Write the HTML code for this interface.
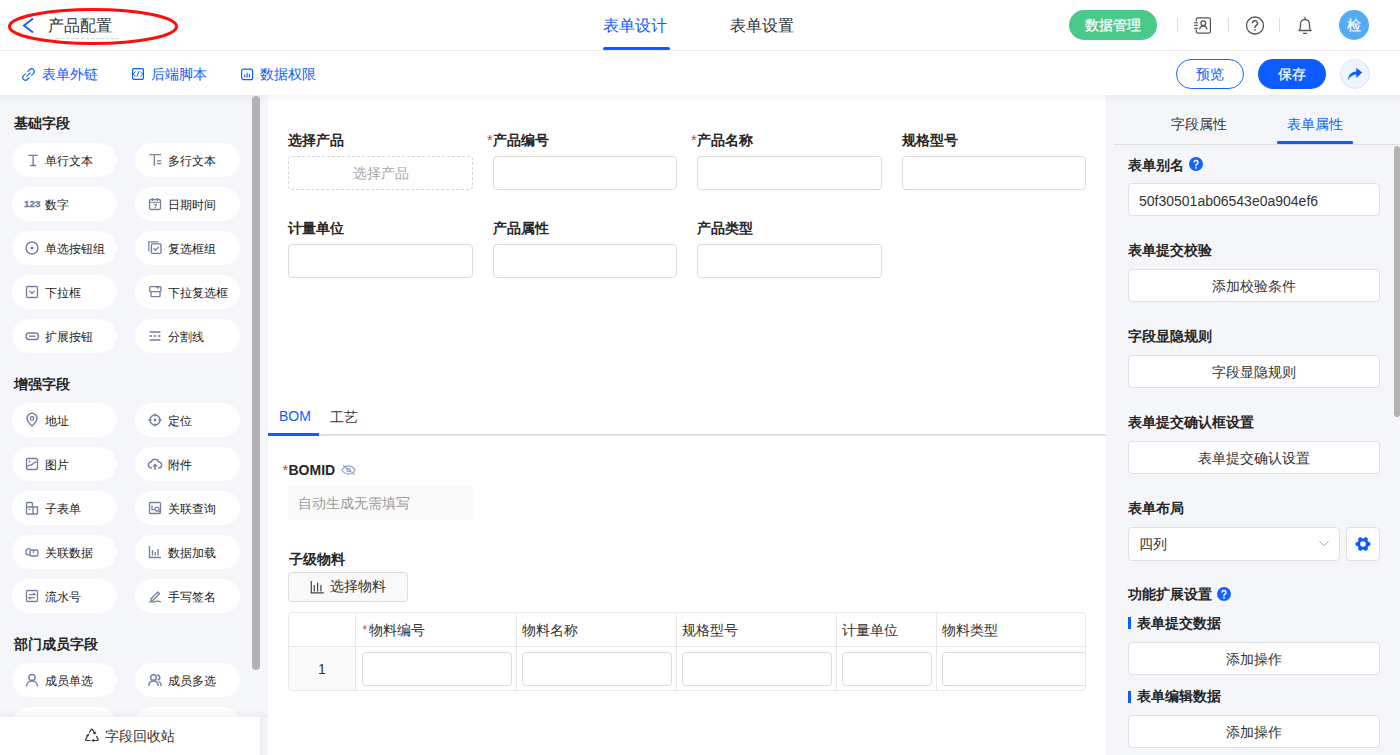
<!DOCTYPE html>
<html><head><meta charset="utf-8">
<style>
*{box-sizing:border-box;margin:0;padding:0}
html,body{width:1400px;height:755px;overflow:hidden;background:#fff;font-family:"Liberation Sans",sans-serif;color:#333}
.a{position:absolute}
.t14{position:absolute;font-size:14px;line-height:20px;white-space:nowrap}
.t12{position:absolute;font-size:12px;line-height:20px;white-space:nowrap}
.t16{position:absolute;font-size:16px;line-height:20px;white-space:nowrap}
.b{font-weight:bold}
.blue{color:#0c5cff}
svg{position:absolute;overflow:visible}
.pill{position:absolute;width:105px;height:34px;border-radius:17px;background:#fff}
.inp{position:absolute;height:34px;border:1px solid #dcdcdc;border-radius:4px;background:#fff}
.rbtn{position:absolute;left:1128px;width:252px;height:33px;border:1px solid #e0e0e0;border-radius:4px;background:#fff}
.req{position:absolute;color:#e5322d;font-size:15px;line-height:20px}
</style></head><body>

<div class="a" style="left:0;top:0;width:1400px;height:51px;background:#fff;border-bottom:1px solid #ececec"></div>
<svg style="left:0px;top:0px" width="200" height="50" viewBox="0 0 200 50" ><polyline points="33,18.5 24,25.5 33,32.5" fill="none" stroke="#1e64f0" stroke-width="2"/></svg>
<div class="t16" style="left:48px;top:16px;color:#333">产品配置</div>
<div class="a" style="left:56px;top:38px;width:63px;border-top:1px dashed #d8d8d8"></div>
<svg style="left:0px;top:0px" width="200" height="50" viewBox="0 0 200 50" ><ellipse cx="93" cy="26.5" rx="83.5" ry="17" fill="none" stroke="#ff0d0d" stroke-width="3"/></svg>
<div class="t16 blue" style="left:603px;top:16px">表单设计</div>
<div class="a" style="left:603px;top:47px;width:67px;height:3px;background:#0c5cff;border-radius:2px"></div>
<div class="t16" style="left:730px;top:16px;color:#333">表单设置</div>
<div class="a" style="left:1069px;top:10px;width:88px;height:30px;border-radius:15px;background:#4bc98b"></div>
<div class="t14" style="left:1085px;top:15px;color:#fff;-webkit-text-stroke:0.25px #fff">数据管理</div>
<div class="a" style="left:1177px;top:18px;width:1px;height:14px;background:#dedede"></div>
<div class="a" style="left:1228px;top:18px;width:1px;height:14px;background:#dedede"></div>
<div class="a" style="left:1279px;top:18px;width:1px;height:14px;background:#dedede"></div>
<svg style="left:1188px;top:10px" width="30" height="30" viewBox="0 0 30 30" ><path d="M8.3 11.2V9.3q0-1.5 1.5-1.5h11.1q1.5 0 1.5 1.5v12.3q0 1.5-1.5 1.5H9.8q-1.5 0-1.5-1.5V19.6" stroke="#555" stroke-width="1.25" fill="none"/><path d="M6.2 12.7h3.6M6.2 15.4h3.6M6.2 18.3h3.6" stroke="#555" stroke-width="1.2"/><circle cx="15.3" cy="13.3" r="2.4" stroke="#555" stroke-width="1.25" fill="none"/><path d="M11.7 19.6a3.6 3.6 0 0 1 7.2 0" stroke="#555" stroke-width="1.25" fill="none"/></svg>
<svg style="left:1245px;top:16px" width="20" height="20" viewBox="0 0 20 20" ><circle cx="10" cy="9.5" r="8.5" stroke="#555" stroke-width="1.3" fill="none"/><path d="M7.5 7.3a2.5 2.5 0 1 1 3.6 2.2c-.8.4-1.1.9-1.1 1.8v.6" stroke="#555" stroke-width="1.4" fill="none"/><circle cx="10" cy="13.8" r="0.9" fill="#555"/></svg>
<svg style="left:1297px;top:16px" width="16" height="19" viewBox="0 0 16 19" ><path d="M2 14.5c1-1 1.5-2 1.5-4V8a4.5 4.5 0 0 1 9 0v2.5c0 2 .5 3 1.5 4z" stroke="#555" stroke-width="1.3" fill="none" stroke-linejoin="round"/><path d="M6 17.3h4M8 0.8v2" stroke="#555" stroke-width="1.3"/></svg>
<div class="a" style="left:1339px;top:10px;width:30px;height:30px;border-radius:50%;background:#55acf2"></div>
<div class="t14" style="left:1347px;top:15px;color:#fff;-webkit-text-stroke:0.2px #fff">检</div>
<svg style="left:22px;top:67.5px" width="13" height="13" viewBox="0 0 13 13" ><path d="M9.671 7.147L11.509 5.309A2.7 2.7 0 0 0 7.691 1.491L5.853 3.329M3.329 5.853L1.491 7.691A2.7 2.7 0 0 0 5.309 11.509L7.147 9.671M4.8 8.2L8.2 4.8" stroke="#0c5cff" stroke-width="1.1" fill="none" stroke-linecap="round"/></svg>
<div class="t14 blue" style="left:42px;top:63.5px">表单外链</div>
<svg style="left:131px;top:67px" width="14" height="14" viewBox="0 0 14 14" ><rect x="1.6" y="1.6" width="10.8" height="10.8" rx="1.2" stroke="#0c5cff" stroke-width="1.2" fill="none"/><path d="M4.6 4.6L2.1 7l2.5 2.4M9.4 4.6L11.9 7 9.4 9.4M8 4.2L5.9 9.8" stroke="#0c5cff" stroke-width="0.95" fill="none"/></svg>
<div class="t14 blue" style="left:151px;top:63.5px">后端脚本</div>
<svg style="left:240px;top:68px" width="14" height="13" viewBox="0 0 14 13" ><rect x="1.6" y="1.2" width="11" height="10.5" rx="2" stroke="#0c5cff" stroke-width="1.2" fill="none"/><path d="M4.8 6.5v3M7.1 4.8v4.7M9.4 6v3.5" stroke="#0c5cff" stroke-width="1.1"/></svg>
<div class="t14 blue" style="left:260px;top:63.5px">数据权限</div>
<div class="a" style="left:1176px;top:59px;width:68px;height:30px;border-radius:15px;border:1px solid #1a66ff;background:#fff"></div>
<div class="t14 blue" style="left:1196px;top:64px">预览</div>
<div class="a" style="left:1258px;top:59px;width:68px;height:30px;border-radius:15px;background:#0c5cff"></div>
<div class="t14" style="left:1278px;top:64px;color:#fff;-webkit-text-stroke:0.25px #fff">保存</div>
<div class="a" style="left:1340px;top:59px;width:30px;height:30px;border-radius:50%;background:#eff4ff;border:1px solid #d9e5fc"></div>
<svg style="left:1347px;top:67px" width="16" height="14" viewBox="0 0 16 14" ><path d="M1 13C1.3 8.2 4.3 5 9.3 4.6V0.8L15.2 5.5 9.3 10.9V7.4C6 7.4 3.2 9.2 1 13z" fill="#0c5cff"/></svg>
<div class="a" style="left:0;top:95px;width:268px;height:660px;background:#f5f6fa"></div>
<div class="a" style="left:1106px;top:95px;width:294px;height:660px;background:#f5f6fa"></div>
<div class="a" style="left:0;top:95px;width:1400px;height:8px;background:linear-gradient(rgba(0,0,0,0.035),rgba(0,0,0,0))"></div>
<div class="t14 b" style="left:14px;top:113px;color:#262626">基础字段</div>
<div class="pill" style="left:12px;top:143px"></div>
<svg style="left:25px;top:153px" width="14" height="14" viewBox="0 0 14 14" ><path d="M3.3 2.4h9.6M8.1 2.4v10.1M5 12.5h6.1" stroke="#76809e" stroke-width="1.35" fill="none"/></svg>
<div class="t12" style="left:45px;top:151px;color:#222">单行文本</div>
<div class="pill" style="left:135px;top:143px"></div>
<svg style="left:148px;top:153px" width="14" height="14" viewBox="0 0 14 14" ><path d="M1.5 1.6H13M6.3 1.6V13M9 7.9h4.3M9 10.7h4.3" stroke="#76809e" stroke-width="1.3" fill="none"/></svg>
<div class="t12" style="left:168px;top:151px;color:#222">多行文本</div>
<div class="pill" style="left:12px;top:187px"></div>
<svg style="left:25px;top:197px" width="14" height="14" viewBox="0 0 14 14" ><text x="-0.9" y="9.6" style="font-family:Liberation Sans;font-weight:bold;font-size:9.8px" fill="#76809e" stroke="#76809e" stroke-width="0.35">123</text></svg>
<div class="t12" style="left:45px;top:195px;color:#222">数字</div>
<div class="pill" style="left:135px;top:187px"></div>
<svg style="left:148px;top:197px" width="14" height="14" viewBox="0 0 14 14" ><rect x="1.5" y="2.5" width="11" height="10" rx="1.5" stroke="#76809e" stroke-width="1.3" fill="none"/><path d="M1.5 5.2h11M4.5 1v3M9.5 1v3M5.5 7.3h3l-1.8 4" stroke="#76809e" stroke-width="1.1" fill="none"/></svg>
<div class="t12" style="left:168px;top:195px;color:#222">日期时间</div>
<div class="pill" style="left:12px;top:231px"></div>
<svg style="left:25px;top:241px" width="14" height="14" viewBox="0 0 14 14" ><circle cx="7" cy="7" r="6" stroke="#76809e" stroke-width="1.45" fill="none"/><circle cx="7" cy="7" r="1.6" fill="#76809e"/></svg>
<div class="t12" style="left:45px;top:239px;color:#222">单选按钮组</div>
<div class="pill" style="left:135px;top:231px"></div>
<svg style="left:148px;top:241px" width="14" height="14" viewBox="0 0 14 14" ><path d="M0.8 10.5V0.8h9.7" stroke="#76809e" stroke-width="1.2" fill="none"/><rect x="3.4" y="2.9" width="9.6" height="9.4" rx="1" stroke="#76809e" stroke-width="1.35" fill="none"/><path d="M5.6 7.3l1.9 1.9 3.3-3.5" stroke="#76809e" stroke-width="1.3" fill="none"/></svg>
<div class="t12" style="left:168px;top:239px;color:#222">复选框组</div>
<div class="pill" style="left:12px;top:275px"></div>
<svg style="left:25px;top:285px" width="14" height="14" viewBox="0 0 14 14" ><rect x="1.5" y="1.5" width="11" height="11" rx="1.2" stroke="#76809e" stroke-width="1.35" fill="none"/><path d="M4.5 6l2.5 2.3 2.5-2.3" stroke="#76809e" stroke-width="1.35" fill="none"/></svg>
<div class="t12" style="left:45px;top:283px;color:#222">下拉框</div>
<div class="pill" style="left:135px;top:275px"></div>
<svg style="left:148px;top:285px" width="14" height="14" viewBox="0 0 14 14" ><rect x="1.6" y="1.6" width="11.3" height="5" rx="1" stroke="#76809e" stroke-width="1.35" fill="none"/><path d="M8.4 2.2l1.3 1.5 1.3-1.5z" fill="#76809e" stroke="#76809e" stroke-width="0.8"/><path d="M3 6.6v4.3q0 .7.7.7h7.6q.7 0 .7-.7V6.6" stroke="#76809e" stroke-width="1.35" fill="none"/></svg>
<div class="t12" style="left:168px;top:283px;color:#222">下拉复选框</div>
<div class="pill" style="left:12px;top:319px"></div>
<svg style="left:25px;top:329px" width="14" height="14" viewBox="0 0 14 14" ><rect x="1" y="4" width="12.5" height="6.5" rx="3.2" stroke="#76809e" stroke-width="1.45" fill="none"/><path d="M4 7.2h6.5" stroke="#76809e" stroke-width="1.45"/></svg>
<div class="t12" style="left:45px;top:327px;color:#222">扩展按钮</div>
<div class="pill" style="left:135px;top:319px"></div>
<svg style="left:148px;top:329px" width="14" height="14" viewBox="0 0 14 14" ><path d="M1.5 3h11M1.5 11h11" stroke="#76809e" stroke-width="1.35"/><path d="M1.5 7h2.5M5.8 7h2.5M10 7h2.5" stroke="#76809e" stroke-width="1.35"/></svg>
<div class="t12" style="left:168px;top:327px;color:#222">分割线</div>
<div class="t14 b" style="left:14px;top:374px;color:#262626">增强字段</div>
<div class="pill" style="left:12px;top:403px"></div>
<svg style="left:25px;top:413px" width="14" height="14" viewBox="0 0 14 14" ><path d="M7 13s-5-4.6-5-7.8a5 5 0 0 1 10 0C12 8.4 7 13 7 13z" stroke="#76809e" stroke-width="1.45" fill="none"/><circle cx="7" cy="5.5" r="1.8" stroke="#76809e" stroke-width="1.35" fill="none"/></svg>
<div class="t12" style="left:45px;top:411px;color:#222">地址</div>
<div class="pill" style="left:135px;top:403px"></div>
<svg style="left:148px;top:413px" width="14" height="14" viewBox="0 0 14 14" ><circle cx="7" cy="7" r="5" stroke="#76809e" stroke-width="1.45" fill="none"/><circle cx="7" cy="7" r="1.4" fill="#76809e"/><path d="M7 0.5v3M7 10.5v3M0.5 7h3M10.5 7h3" stroke="#76809e" stroke-width="1.45"/></svg>
<div class="t12" style="left:168px;top:411px;color:#222">定位</div>
<div class="pill" style="left:12px;top:447px"></div>
<svg style="left:25px;top:457px" width="14" height="14" viewBox="0 0 14 14" ><rect x="1.5" y="1.5" width="11" height="11" rx="1.5" stroke="#76809e" stroke-width="1.35" fill="none"/><path d="M1.8 9.5c3-3 4 0 6-2.5s3-2.5 4.5-2" stroke="#76809e" stroke-width="1.35" fill="none"/><circle cx="4.5" cy="4.5" r="0.9" fill="#76809e"/></svg>
<div class="t12" style="left:45px;top:455px;color:#222">图片</div>
<div class="pill" style="left:135px;top:447px"></div>
<svg style="left:148px;top:457px" width="14" height="14" viewBox="0 0 14 14" ><path d="M4 11H3.5a3 3 0 0 1-.3-6 4 4 0 0 1 7.6 0 3 3 0 0 1-.3 6H10" stroke="#76809e" stroke-width="1.45" fill="none"/><path d="M7 13V7.5M5 9.5l2-2 2 2" stroke="#76809e" stroke-width="1.45" fill="none"/></svg>
<div class="t12" style="left:168px;top:455px;color:#222">附件</div>
<div class="pill" style="left:12px;top:491px"></div>
<svg style="left:25px;top:501px" width="14" height="14" viewBox="0 0 14 14" ><path d="M1.5 13V2.5q0-1 1-1h4q1 0 1 1V6M1.5 6h11v6q0 1-1 1h-10M8 6v7" stroke="#76809e" stroke-width="1.35" fill="none"/><path d="M3.5 8.5h2" stroke="#76809e" stroke-width="1.25"/></svg>
<div class="t12" style="left:45px;top:499px;color:#222">子表单</div>
<div class="pill" style="left:135px;top:491px"></div>
<svg style="left:148px;top:501px" width="14" height="14" viewBox="0 0 14 14" ><rect x="1.5" y="1.5" width="11" height="11" rx="1" stroke="#76809e" stroke-width="1.35" fill="none"/><path d="M4 4.3v4.2h2.5" stroke="#76809e" stroke-width="1.25" fill="none"/><circle cx="9" cy="8" r="2" stroke="#76809e" stroke-width="1.25" fill="none"/><path d="M10.4 9.5l2.2 2.2" stroke="#76809e" stroke-width="1.25"/></svg>
<div class="t12" style="left:168px;top:499px;color:#222">关联查询</div>
<div class="pill" style="left:12px;top:535px"></div>
<svg style="left:25px;top:545px" width="14" height="14" viewBox="0 0 14 14" ><path d="M6 3.8H3.2Q1 3.8 1 6v1.6q0 2.2 2.2 2.2H6" stroke="#76809e" stroke-width="1.35" fill="none"/><rect x="5" y="5" width="8" height="6" rx="1.6" stroke="#76809e" stroke-width="1.35" fill="none"/><path d="M8.5 5v3" stroke="#76809e" stroke-width="1.25"/></svg>
<div class="t12" style="left:45px;top:543px;color:#222">关联数据</div>
<div class="pill" style="left:135px;top:535px"></div>
<svg style="left:148px;top:545px" width="14" height="14" viewBox="0 0 14 14" ><path d="M1.5 1v11.5h11.5M4.5 5v5.5M7.2 7v3.5M10 4v6.5" stroke="#76809e" stroke-width="1.35" fill="none"/></svg>
<div class="t12" style="left:168px;top:543px;color:#222">数据加载</div>
<div class="pill" style="left:12px;top:579px"></div>
<svg style="left:25px;top:589px" width="14" height="14" viewBox="0 0 14 14" ><rect x="1.5" y="1.5" width="11" height="11" rx="1" stroke="#76809e" stroke-width="1.35" fill="none"/><path d="M4 5.5h6L8.3 3.8M10 8.5H4l1.7 1.7" stroke="#76809e" stroke-width="1.25" fill="none"/></svg>
<div class="t12" style="left:45px;top:587px;color:#222">流水号</div>
<div class="pill" style="left:135px;top:579px"></div>
<svg style="left:148px;top:589px" width="14" height="14" viewBox="0 0 14 14" ><path d="M3 9.8L9.8 3l1.7 1.7L4.7 11.5H3z" stroke="#76809e" stroke-width="1.3" fill="none" stroke-linejoin="round"/><path d="M1 13.2c2-1.2 3.2.4 5.2-.4s4-1 7 .2" stroke="#76809e" stroke-width="1.25" fill="none"/></svg>
<div class="t12" style="left:168px;top:587px;color:#222">手写签名</div>
<div class="t14 b" style="left:14px;top:633.5px;color:#262626">部门成员字段</div>
<div class="pill" style="left:12px;top:663px"></div>
<svg style="left:25px;top:673px" width="14" height="14" viewBox="0 0 14 14" ><circle cx="7" cy="4.5" r="3" stroke="#76809e" stroke-width="1.45" fill="none"/><path d="M1.5 13.5c0-3.5 2.5-5.5 5.5-5.5s5.5 2 5.5 5.5" stroke="#76809e" stroke-width="1.45" fill="none"/></svg>
<div class="t12" style="left:45px;top:671px;color:#222">成员单选</div>
<div class="pill" style="left:135px;top:663px"></div>
<svg style="left:148px;top:673px" width="14" height="14" viewBox="0 0 14 14" ><circle cx="5.5" cy="4.5" r="2.8" stroke="#76809e" stroke-width="1.45" fill="none"/><path d="M0.8 13c0-3 2-5 4.7-5s4.7 2 4.7 5M9 2a2.5 2.5 0 0 1 .5 5M11 8.5c1.3.8 2.2 2.4 2.2 4.5" stroke="#76809e" stroke-width="1.45" fill="none"/></svg>
<div class="t12" style="left:168px;top:671px;color:#222">成员多选</div>
<div class="pill" style="left:12px;top:707px"></div><div class="pill" style="left:135px;top:707px"></div>
<div class="a" style="left:252px;top:96px;width:8px;height:574px;border-radius:4px;background:#b2b2b2"></div>
<div class="a" style="left:0;top:709px;width:268px;height:8px;background:linear-gradient(rgba(0,0,0,0),rgba(0,0,0,0.04))"></div>
<div class="a" style="left:260px;top:717px;width:8px;height:38px;background:linear-gradient(90deg,rgba(0,0,0,0.035),rgba(0,0,0,0))"></div>
<div class="a" style="left:0;top:717px;width:260px;height:38px;background:#fff"></div>
<svg style="left:84px;top:728px" width="16" height="14" viewBox="0 0 16 14" ><path d="M5.6 4.3L7 1.7Q7.8 0.6 8.6 1.7L10.6 5.2M12.5 8.3L14 11.3Q14.4 12.5 13.2 12.5H8.4M6 12.5H2.6Q1.3 12.5 1.8 11.3L3.7 7.4" stroke="#333" stroke-width="1.2" fill="none" stroke-linecap="round"/><path d="M9.2 5.4l2.2.7.3-2.3zM9.6 11.2l-1.9 1.3 1.9 1.3zM2.4 7.6l2 .4.4-2.2z" fill="#333" stroke="#333" stroke-width="0.5" stroke-linejoin="round"/></svg>
<div class="t14" style="left:105px;top:725.5px;color:#333">字段回收站</div>
<div class="t14 b" style="left:288px;top:130px;color:#262626">选择产品</div>
<div class="a" style="left:288px;top:156px;width:185px;height:34px;border:1px dashed #d6d6d6;border-radius:4px"></div>
<div class="t14" style="left:352.5px;top:163px;color:#a8a8a8">选择产品</div>
<div class="req" style="left:487px;top:130px">*</div>
<div class="t14 b" style="left:493px;top:130px;color:#262626">产品编号</div>
<div class="inp" style="left:493px;top:156px;width:184px"></div>
<div class="req" style="left:691px;top:130px">*</div>
<div class="t14 b" style="left:697px;top:130px;color:#262626">产品名称</div>
<div class="inp" style="left:697px;top:156px;width:185px"></div>
<div class="t14 b" style="left:902px;top:130px;color:#262626">规格型号</div>
<div class="inp" style="left:902px;top:156px;width:184px"></div>
<div class="t14 b" style="left:288px;top:218px;color:#262626">计量单位</div>
<div class="inp" style="left:288px;top:244px;width:185px"></div>
<div class="t14 b" style="left:493px;top:218px;color:#262626">产品属性</div>
<div class="inp" style="left:493px;top:244px;width:184px"></div>
<div class="t14 b" style="left:697px;top:218px;color:#262626">产品类型</div>
<div class="inp" style="left:697px;top:244px;width:185px"></div>
<div class="t14 blue" style="left:279px;top:406px">BOM</div>
<div class="t14" style="left:330px;top:407px;color:#333">工艺</div>
<div class="a" style="left:268px;top:434px;width:838px;height:2px;background:#e0e0e0"></div>
<div class="a" style="left:268px;top:433px;width:51px;height:3px;background:#0c5cff"></div>
<div class="req" style="left:282.5px;top:460px">*</div>
<div class="t14 b" style="left:288.5px;top:460px;color:#262626">BOMID</div>
<svg style="left:341px;top:465px" width="15" height="10" viewBox="0 0 15 10" ><path d="M0.8 5C3 1.8 5.2 0.9 7.5 0.9S12 1.8 14.2 5C12 8.2 9.8 9.1 7.5 9.1S3 8.2 0.8 5z" stroke="#8ea3c8" stroke-width="1.1" fill="none"/><circle cx="7.5" cy="5" r="1.8" stroke="#8ea3c8" stroke-width="1.1" fill="none"/><path d="M2 0.2L13.8 9.6" stroke="#8ea3c8" stroke-width="1.1"/></svg>
<div class="a" style="left:288px;top:486px;width:185px;height:34px;border-radius:4px;background:#fafafa"></div>
<div class="t14" style="left:297.5px;top:493px;color:#9c9c9c">自动生成无需填写</div>
<div class="t14 b" style="left:288.5px;top:549px;color:#262626">子级物料</div>
<div class="a" style="left:288px;top:572px;width:120px;height:30px;border:1px solid #dcdcdc;border-radius:4px;background:#f9f9f9"></div>
<svg style="left:310px;top:580px" width="15" height="14" viewBox="0 0 15 14" ><path d="M1.3 1v11.8h12.5M4.3 5v6.5M7.6 2.8v8.7M10.9 5v6.5" stroke="#444" stroke-width="1.2" fill="none"/></svg>
<div class="t14" style="left:330px;top:576px;color:#333">选择物料</div>
<div class="a" style="left:288px;top:612px;width:798px;height:79px;border:1px solid #e8e8e8;border-radius:4px;overflow:hidden">
<div class="a" style="left:0;top:34px;width:67px;height:43px;background:#fafafa"></div>
<div class="a" style="left:0;top:33px;width:797px;height:1px;background:#e8e8e8"></div>
<div class="a" style="left:66px;top:0;width:1px;height:77px;background:#e8e8e8"></div>
<div class="a" style="left:227px;top:0;width:1px;height:77px;background:#e8e8e8"></div>
<div class="a" style="left:387px;top:0;width:1px;height:77px;background:#e8e8e8"></div>
<div class="a" style="left:547px;top:0;width:1px;height:77px;background:#e8e8e8"></div>
<div class="a" style="left:647px;top:0;width:1px;height:77px;background:#e8e8e8"></div>
<div class="req" style="left:73.5px;top:7px;font-size:12px">*</div>
<div class="t14" style="left:79.5px;top:7px;color:#333">物料编号</div>
<div class="t14" style="left:233px;top:7px;color:#333">物料名称</div>
<div class="t14" style="left:393px;top:7px;color:#333">规格型号</div>
<div class="t14" style="left:553px;top:7px;color:#333">计量单位</div>
<div class="t14" style="left:653px;top:7px;color:#333">物料类型</div>
<div class="t14" style="left:29px;top:46px;color:#333">1</div>
<div class="inp" style="left:73px;top:39px;width:150px;border-color:#dcdcdc"></div>
<div class="inp" style="left:233px;top:39px;width:150px;border-color:#dcdcdc"></div>
<div class="inp" style="left:393px;top:39px;width:150px;border-color:#dcdcdc"></div>
<div class="inp" style="left:553px;top:39px;width:90px;border-color:#dcdcdc"></div>
<div class="inp" style="left:653px;top:39px;width:160px;border-color:#dcdcdc"></div>
</div>
<div class="t14" style="left:1171px;top:113.5px;color:#333">字段属性</div>
<div class="t14 blue" style="left:1287px;top:113.5px">表单属性</div>
<div class="a" style="left:1114px;top:144px;width:286px;height:1px;background:#dedede"></div>
<div class="a" style="left:1277px;top:141px;width:76px;height:3px;background:#0c5cff;border-radius:1px"></div>
<div class="a" style="left:1394px;top:146px;width:6px;height:271px;border-radius:3px;background:#b2b2b2"></div>
<div class="t14 b" style="left:1128px;top:155px;color:#262626">表单别名</div>
<svg style="left:1189px;top:157px" width="14" height="14" viewBox="0 0 14 14" ><circle cx="7" cy="7" r="7" fill="#1563ff"/><path d="M5 5.4a2 2 0 1 1 2.9 1.8c-.6.3-.9.7-.9 1.3v.5" stroke="#fff" stroke-width="1.5" fill="none"/><circle cx="7" cy="10.7" r="0.95" fill="#fff"/></svg>
<div class="rbtn" style="top:183px"></div>
<div class="t14" style="left:1139px;top:190.5px;color:#333">50f30501ab06543e0a904ef6</div>
<div class="t14 b" style="left:1128px;top:240px;color:#262626">表单提交校验</div>
<div class="rbtn" style="top:269px"></div>
<div class="t14" style="left:1128px;width:252px;text-align:center;top:276px;color:#333">添加校验条件</div>
<div class="t14 b" style="left:1128px;top:326px;color:#262626">字段显隐规则</div>
<div class="rbtn" style="top:355px"></div>
<div class="t14" style="left:1128px;width:252px;text-align:center;top:362px;color:#333">字段显隐规则</div>
<div class="t14 b" style="left:1128px;top:412px;color:#262626">表单提交确认框设置</div>
<div class="rbtn" style="top:441px"></div>
<div class="t14" style="left:1128px;width:252px;text-align:center;top:448px;color:#333">表单提交确认设置</div>
<div class="t14 b" style="left:1128px;top:498px;color:#262626">表单布局</div>
<div class="a" style="left:1128px;top:527px;width:212px;height:33.5px;border:1px solid #e0e0e0;border-radius:4px;background:#fff"></div>
<div class="t14" style="left:1139px;top:534px;color:#333">四列</div>
<svg style="left:1318px;top:540px" width="12" height="8" viewBox="0 0 12 8" ><path d="M1.5 1.5l4.5 4.3 4.5-4.3" stroke="#a8a8a8" stroke-width="1" fill="none"/></svg>
<div class="a" style="left:1346px;top:527px;width:34px;height:33.5px;border:1px solid #e0e0e0;border-radius:4px;background:#fff"></div>
<svg style="left:1355px;top:536.5px" width="16" height="14" viewBox="0 0 16 14" ><polygon points="14.2,7 11.1,12.4 4.9,12.4 1.8,7 4.9,1.6 11.1,1.6" fill="#0c5cff" stroke="#0c5cff" stroke-width="2.8" stroke-linejoin="round"/><circle cx="14.58" cy="3.2" r="2" fill="#fff"/><circle cx="8" cy="-0.6" r="2" fill="#fff"/><circle cx="1.42" cy="3.2" r="2" fill="#fff"/><circle cx="1.42" cy="10.8" r="2" fill="#fff"/><circle cx="8" cy="14.6" r="2" fill="#fff"/><circle cx="14.58" cy="10.8" r="2" fill="#fff"/><circle cx="8" cy="7" r="2.8" fill="#fff"/></svg>
<div class="t14 b" style="left:1128px;top:584px;color:#262626">功能扩展设置</div>
<svg style="left:1217px;top:587px" width="14" height="14" viewBox="0 0 14 14" ><circle cx="7" cy="7" r="7" fill="#1563ff"/><path d="M5 5.4a2 2 0 1 1 2.9 1.8c-.6.3-.9.7-.9 1.3v.5" stroke="#fff" stroke-width="1.5" fill="none"/><circle cx="7" cy="10.7" r="0.95" fill="#fff"/></svg>
<div class="a" style="left:1128px;top:617px;width:3px;height:12px;background:#0c5cff"></div>
<div class="t14 b" style="left:1137px;top:613px;color:#262626">表单提交数据</div>
<div class="rbtn" style="top:642px"></div>
<div class="t14" style="left:1128px;width:252px;text-align:center;top:649px;color:#333">添加操作</div>
<div class="a" style="left:1128px;top:690.5px;width:3px;height:12px;background:#0c5cff"></div>
<div class="t14 b" style="left:1137px;top:686px;color:#262626">表单编辑数据</div>
<div class="rbtn" style="top:715px"></div>
<div class="t14" style="left:1128px;width:252px;text-align:center;top:722px;color:#333">添加操作</div>
<!--BODY-END-->
</body></html>
